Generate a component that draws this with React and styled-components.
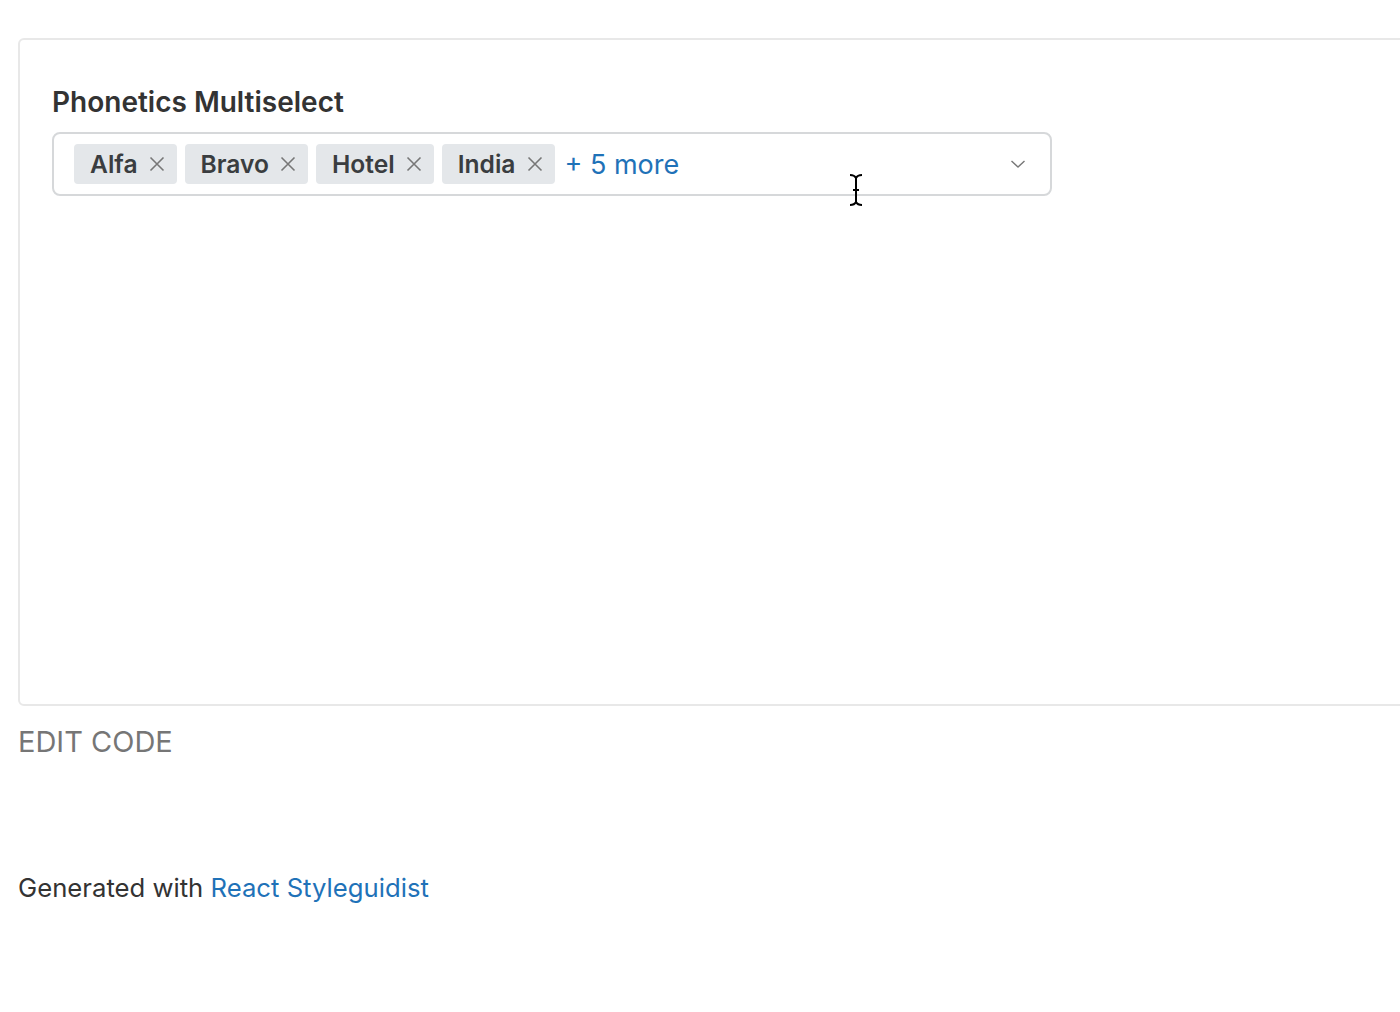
import React from 'react';
import styled, { createGlobalStyle } from 'styled-components';

const GlobalStyle = createGlobalStyle`
  html, body {
    margin: 0;
    padding: 0;
    background: #fff;
    overflow: hidden;
  }
  body {
    font-family: Inter, "Liberation Sans", sans-serif;
    color: #333;
  }
`;

const Page = styled.div`
  padding: 38px 0 0 18px;
  width: 1600px;
`;

const Preview = styled.div`
  box-sizing: border-box;
  width: 1500px;
  height: 668px;
  border: 2px solid #e8e8e8;
  border-radius: 6px;
  padding: 46px 32px;
  position: relative;
`;

const Label = styled.div`
  font-size: 28px;
  font-weight: 600;
  color: #333;
  line-height: 32px;
  margin-bottom: 14px;
`;

const Select = styled.div`
  box-sizing: border-box;
  width: 1000px;
  height: 64px;
  border: 2px solid #d6d8da;
  border-radius: 8px;
  display: flex;
  align-items: center;
  padding: 0 24px 0 20px;
  gap: 8px;
`;

const Tag = styled.span`
  display: inline-flex;
  align-items: center;
  height: 40px;
  padding: 0 12px 0 16px;
  gap: 11px;
  background: #e4e7ea;
  border-radius: 4px;
  font-size: 24.6px;
  font-weight: 600;
  color: #3a3d40;
`;

const More = styled.span`
  margin-left: 2px;
  font-size: 27px;
  color: #1f72b8;
`;

const Chevron = styled.svg`
  margin-left: auto;
  width: 16px;
  height: 10px;
`;

const Cursor = styled.svg`
  position: absolute;
  left: 827px;
  top: 133px;
  width: 18px;
  height: 34px;
`;

const EditCode = styled.div`
  margin-top: 19px;
  font-size: 29px;
  color: #767676;
  line-height: 34px;
`;

const Footer = styled.footer`
  margin-top: 113px;
  font-size: 25.7px;
  color: #333;
  a {
    color: #1f72b8;
    text-decoration: none;
  }
`;

function Close() {
  return (
    <svg width="16" height="16" viewBox="0 0 16 16">
      <path d="M1.5 1.5 L14.5 14.5 M14.5 1.5 L1.5 14.5" stroke="#777" strokeWidth="1.6" fill="none" />
    </svg>
  );
}

const tags = ['Alfa', 'Bravo', 'Hotel', 'India'];

export default function App() {
  return (
    <>
      <GlobalStyle />
      <Page>
        <Preview>
          <Label>Phonetics Multiselect</Label>
          <Select>
            {tags.map((t) => (
              <Tag key={t}>
                {t}
                <Close />
              </Tag>
            ))}
            <More>+ 5 more</More>
            <Chevron viewBox="0 0 16 10">
              <path d="M1.5 2 L8 8 L14.5 2" stroke="#777" strokeWidth="1.4" fill="none" />
            </Chevron>
          </Select>
          <Cursor viewBox="0 0 18 34">
            <path
              d="M3 2 C6 2 8 3 9 5 C10 3 12 2 15 2 M9 5 V29 M6 17 H12 M3 32 C6 32 8 31 9 29 C10 31 12 32 15 32"
              stroke="#000"
              strokeWidth="2"
              fill="none"
            />
          </Cursor>
        </Preview>
        <EditCode>EDIT CODE</EditCode>
        <Footer>
          Generated with <a href="#">React Styleguidist</a>
        </Footer>
      </Page>
    </>
  );
}
